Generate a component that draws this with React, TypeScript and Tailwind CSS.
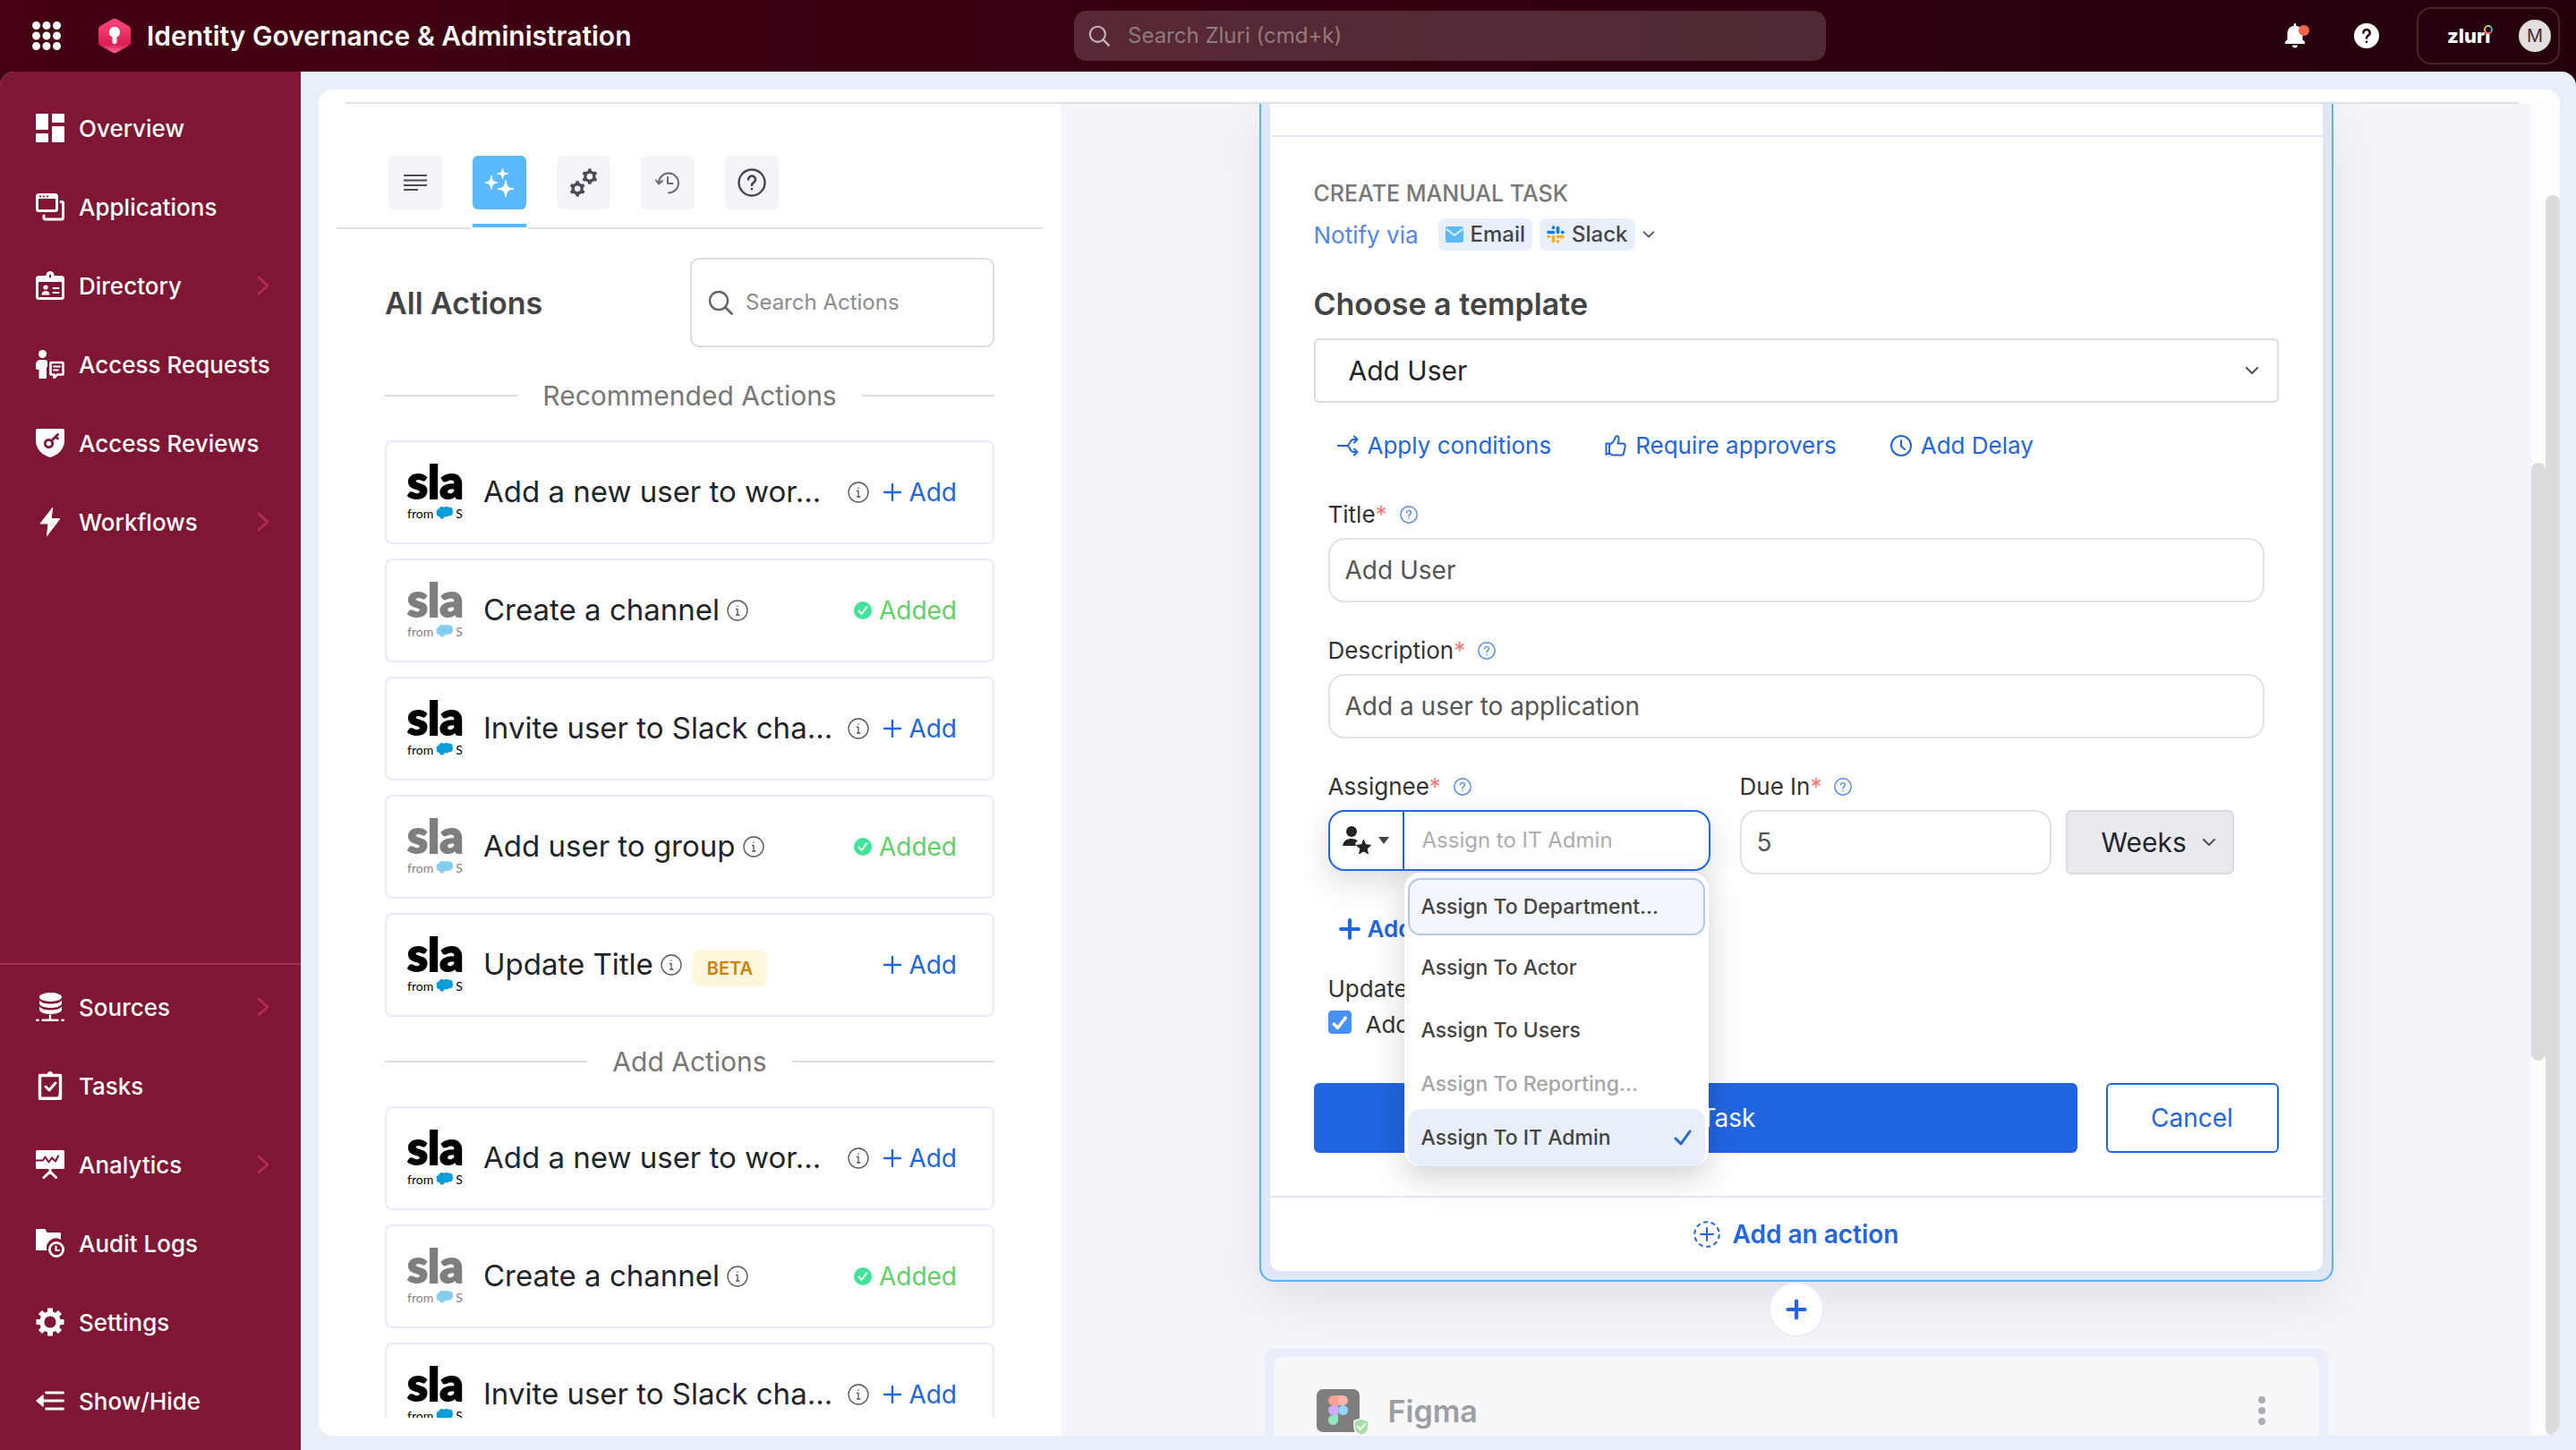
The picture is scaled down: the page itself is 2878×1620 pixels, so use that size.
import React, { useState } from 'react';

interface NavItem {
    label: string;
    icon: React.ReactNode;
    expandable?: boolean;
}

interface Action {
    title: string;
    added?: boolean;
    beta?: boolean;
}

const Glyph: React.FC<{ children: React.ReactNode, className?: string, viewBox?: string }> = ({ children, className = 'size-8', viewBox = '0 0 32 32' }) => (
    <svg viewBox={viewBox} className={`shrink-0 ${className}`} fill="none" stroke="currentColor" strokeLinecap="round" strokeLinejoin="round" aria-hidden="true">
        {children}
    </svg>
);

const mainNav: NavItem[] = [
    {
        label: 'Overview',
        icon: <Glyph><path d="M1 0h12a1 1 0 0 1 1 1v16a1 1 0 0 1-1 1H1a1 1 0 0 1-1-1V1a1 1 0 0 1 1-1zM19 0h12a1 1 0 0 1 1 1v8a1 1 0 0 1-1 1H19a1 1 0 0 1-1-1V1a1 1 0 0 1 1-1zM1 22h12a1 1 0 0 1 1 1v8a1 1 0 0 1-1 1H1a1 1 0 0 1-1-1v-8a1 1 0 0 1 1-1zM19 14h12a1 1 0 0 1 1 1v16a1 1 0 0 1-1 1H19a1 1 0 0 1-1-1V15a1 1 0 0 1 1-1z" fill="currentColor" stroke="none" /></Glyph>,
    },
    {
        label: 'Applications',
        icon: (
            <Glyph>
                <rect x="1.5" y="2.5" width="22" height="18" rx="2" strokeWidth="3" />
                <path d="M2 2h21v5H2z" fill="currentColor" stroke="none" />
                <path d="M5 4.5h.2M9 4.5h.2M13 4.5h.2" stroke="#7f1633" strokeWidth="2" />
                <path d="M28 10.5h1a1.5 1.5 0 0 1 1.5 1.5v16a2 2 0 0 1-2 2H11a2 2 0 0 1-2-2v-2" strokeWidth="3" />
            </Glyph>
        ),
    },
    {
        label: 'Directory',
        expandable: true,
        icon: (
            <Glyph>
                <rect x="1.5" y="6.5" width="29" height="24" rx="2" strokeWidth="3" />
                <path d="M1 6h30v6H1z" fill="currentColor" stroke="none" />
                <path d="M12.5 8V4.5a3.5 3.5 0 0 1 7 0V8z" fill="currentColor" strokeWidth="2" />
                <path d="M16 4.5v2" stroke="#7f1633" strokeWidth="2" />
                <circle cx="11" cy="18" r="2.6" fill="currentColor" stroke="none" />
                <path d="M6.5 26.5a4.5 4.5 0 0 1 9 0z" fill="currentColor" stroke="none" />
                <path d="M19.5 19h6M19.5 24h6" strokeWidth="2" />
            </Glyph>
        ),
    },
    {
        label: 'Access Requests',
        icon: (
            <Glyph>
                <circle cx="7.5" cy="4.5" r="4.5" fill="currentColor" stroke="none" />
                <path d="M0 16a5 5 0 0 1 5-5h5a3 3 0 0 1 3 3v5h-1v12a1 1 0 0 1-1 1H4.5a1 1 0 0 1-1-1V22H1.5A1.5 1.5 0 0 1 0 20.5z" fill="currentColor" stroke="none" />
                <path d="M17 14h13a.5.5 0 0 1 .5.5V27a.5.5 0 0 1-.5.5h-6l-3.500 3.500v-3.500H17a.5.5 0 0 1-.5-.5V14.500A.5.5 0 0 1 17 14z" strokeWidth="2.6" />
                <path d="M20 18.5h7M20 22.5h5" strokeWidth="1.8" />
            </Glyph>
        ),
    },
    {
        label: 'Access Reviews',
        icon: (
            <Glyph>
                <path d="M2 0h28a2 2 0 0 1 2 2v11c0 9-6 16-16 19C6 29 0 22 0 13V2a2 2 0 0 1 2-2z" fill="currentColor" stroke="none" />
                <circle cx="14.5" cy="16.5" r="4.2" stroke="#7f1633" strokeWidth="2.8" />
                <path d="M17.5 13.5 24.5 6.5M22 9l2.5 2" stroke="#7f1633" strokeWidth="2.8" />
            </Glyph>
        ),
    },
    {
        label: 'Workflows',
        expandable: true,
        icon: <Glyph><path d="M18.5.5 5 18h9l-1.500 13.500L27 12.500h-9.500z" fill="currentColor" strokeWidth="1" /></Glyph>,
    },
];

const bottomNav: NavItem[] = [
    {
        label: 'Sources',
        expandable: true,
        icon: (
            <Glyph>
                <ellipse cx="16.5" cy="5" rx="12.5" ry="5" fill="currentColor" stroke="none" />
                <path d="M4 8.500c2 3 7 4 12.500 4s10.500-1 12.500-4V12c0 2.800-5.600 5-12.500 5S4 14.800 4 12zM4 15.500c2 3 7 4 12.500 4s10.500-1 12.500-4V19c0 2.800-5.600 5-12.500 5S4 21.800 4 19z" fill="currentColor" stroke="none" />
                <path d="M16 25.500v4M7.500 30.700h17M1.200 30.700h1.400M29.400 30.700h1.400" strokeWidth="2.4" />
            </Glyph>
        ),
    },
    {
        label: 'Tasks',
        icon: (
            <Glyph>
                <path d="M4.500 4.500h23v25.700h-23z" strokeWidth="3.4" />
                <path d="M11 3h2a3 3 0 0 1 6 0h2v3H11zM29 31h-9c4-1 6-4 6-8h3z" fill="currentColor" stroke="none" />
                <path d="m11 17 4 4 7-8" strokeWidth="3" />
            </Glyph>
        ),
    },
    {
        label: 'Analytics',
        expandable: true,
        icon: (
            <Glyph>
                <path d="M1.500 0h29A1.500 1.500 0 0 1 32 1.500v18a1.500 1.500 0 0 1-1.500 1.500h-29A1.500 1.500 0 0 1 0 19.500v-18A1.500 1.500 0 0 1 1.500 0z" fill="currentColor" stroke="none" />
                <path d="M0 11.500h8l2.500-4 4 6 3.500-5 4 4 3-6" stroke="#7f1633" strokeWidth="2" />
                <path d="M16 21v3l-7 6.500M16 24l6.500 6.500" strokeWidth="3" />
            </Glyph>
        ),
    },
    {
        label: 'Audit Logs',
        icon: (
            <Glyph>
                <path d="M1 0h9.500l2 4H27a1 1 0 0 1 1 1v7a10.500 10.500 0 0 0-15.500 12H1a1 1 0 0 1-1-1V1a1 1 0 0 1 1-1z" fill="currentColor" stroke="none" />
                <circle cx="23" cy="23" r="7.6" strokeWidth="2.8" />
                <path d="M22.500 19.500V24h3.500" strokeWidth="2.2" />
            </Glyph>
        ),
    },
    {
        label: 'Settings',
        icon: (
            <Glyph>
                <circle cx="16" cy="16" r="9.2" strokeWidth="5.2" />
                <path d="M16 .5v5M16 26.500v5M.5 16h5M26.500 16h5M5 5l3.500 3.500M23.500 23.500 27 27M27 5l-3.500 3.500M8.500 23.500 5 27" strokeWidth="6" strokeLinecap="butt" />
            </Glyph>
        ),
    },
    {
        label: 'Show/Hide',
        icon: (
            <Glyph>
                <path d="M8 10v12L1 16z" fill="currentColor" strokeWidth="1.5" />
                <path d="M11.500 7h19M8 16h22.500M11.500 25h19" strokeWidth="2.8" />
            </Glyph>
        ),
    },
];

const recommendedActions: Action[] = [
    { title: 'Add a new user to wor...' },
    { title: 'Create a channel', added: true },
    { title: 'Invite user to Slack cha...' },
    { title: 'Add user to group', added: true },
    { title: 'Update Title', beta: true },
];

const addActions: Action[] = [
    { title: 'Add a new user to wor...' },
    { title: 'Create a channel', added: true },
    { title: 'Invite user to Slack cha...' },
];

const NavLink: React.FC<{ item: NavItem }> = ({ item }) => (
    <li>
        <a href="#" className="flex h-[88px] items-center gap-4 pr-[34px] pl-10 text-[26px] font-medium text-white">
            {item.icon}
            <span className="whitespace-nowrap">{item.label}</span>
            {item.expandable && (
                <Glyph className="ml-auto h-6 w-4 text-[#b52a5a]" viewBox="0 0 16 24">
                    <path d="m3 3 10 9L3 21" strokeWidth="3" />
                </Glyph>
            )}
        </a>
    </li>
);

const InfoIcon = () => (
    <Glyph className="size-6 text-[#555]" viewBox="0 0 24 24">
        <circle cx="12" cy="12" r="11" strokeWidth="1.3" />
        <path d="M10.500 10.500H12v6.500M10.500 17h3.500M12 7v.3" strokeWidth="1.3" />
    </Glyph>
);

const HelpIcon = () => (
    <Glyph className="size-5 text-[#4f86ec]" viewBox="0 0 20 20">
        <circle cx="10" cy="10" r="9.2" strokeWidth="1.4" />
        <path d="M7.600 7.800a2.400 2.400 0 1 1 3.600 2.100c-.8.5-1.200.9-1.200 1.900M10 14.300v.2" strokeWidth="1.4" />
    </Glyph>
);

const ChevronDown: React.FC<{ className?: string }> = ({ className = 'h-3 w-4 text-[#555]' }) => (
    <Glyph className={className} viewBox="0 0 16 12">
        <path d="m2 3 6 6 6-6" strokeWidth="2.2" />
    </Glyph>
);

const SearchIcon: React.FC<{ className: string }> = ({ className }) => (
    <Glyph className={className} viewBox="0 0 28 28">
        <circle cx="12" cy="12" r="10" strokeWidth="2.4" />
        <path d="m19.500 19.500 7 7" strokeWidth="2.8" />
    </Glyph>
);

const SlackWordmark: React.FC<{ muted?: boolean }> = ({ muted }) => (
    <span className={`flex h-[72px] w-[66px] shrink-0 flex-col font-['Lato',sans-serif] text-black ${muted ? 'opacity-50' : ''}`}>
        <svg viewBox="0 0 66 50" className="h-[50px] w-[66px] shrink-0 overflow-visible" aria-hidden="true">
            <text x="0" y="43" fontWeight="900" fontSize="52" fill="#000" stroke="#000" strokeWidth="2">sla</text>
        </svg>
        <span className="flex items-center gap-[3px] text-sm leading-5">
            from
            <svg viewBox="0 0 19 16" className="h-4 w-[19px] shrink-0" aria-hidden="true">
                <path d="M3 3c1-3 4-4 6-2 2-2 5-1 6 0 3-1 4 2 4 5s-2 5-4 4c-2 2-4 1-5 1-1 3-5 4-6 0-3 0-4-2-3-4-1-2 0-4 2-4z" fill="#0d9ddb" />
            </svg>
            S
        </span>
    </span>
);

const ActionCard: React.FC<{ action: Action }> = ({ action }) => (
    <li className="flex h-[116px] shrink-0 items-center rounded-lg border-2 border-[#e8ebfa] pr-10 pl-[23px]">
        <SlackWordmark muted={action.added} />
        <span className="ml-[19px] text-[33px] whitespace-nowrap text-[#212529]">{action.title}</span>
        <span className={action.title.endsWith('...') ? 'ml-auto' : 'ml-2'}><InfoIcon /></span>
        {action.beta && <span className="mt-2 ml-3 rounded-lg bg-[#fff6dc] px-4 text-xl leading-10 font-semibold text-[#d07f05]">BETA</span>}
        {action.added ? (
            <span className="ml-auto flex items-center gap-2 text-[28px] text-[#5fd068]">
                <Glyph className="size-5" viewBox="0 0 20 20">
                    <circle cx="10" cy="10" r="10" fill="#40e39a" stroke="none" />
                    <path d="m5.500 10.500 3 3.500 6-8" stroke="#fff" strokeWidth="2" />
                </Glyph>
                Added
            </span>
        ) : (
            <button className={action.title.endsWith('...') ? 'ml-4 flex items-center gap-2 text-[28px] text-[#2265e0]' : 'ml-auto flex items-center gap-2 text-[28px] text-[#2265e0]'}>
                <Glyph className="size-5" viewBox="0 0 20 20"><path d="M10 1v18M1 10h18" strokeWidth="2.4" /></Glyph>
                Add
            </button>
        )}
    </li>
);

const ActionGroup: React.FC<{ heading: string, actions: Action[] }> = ({ heading, actions }) => (
    <section>
        <h3 className="my-[30px] flex items-center gap-7 text-[30px] leading-10 text-[#777]">
            <span className="h-0.5 flex-1 bg-[#dcdcdc]" />
            {heading}
            <span className="h-0.5 flex-1 bg-[#dcdcdc]" />
        </h3>
        <ul className="flex flex-col gap-4">
            {actions.map(action => <ActionCard key={action.title} action={action} />)}
        </ul>
    </section>
);

const tabs = [
    {
        name: 'Details',
        icon: <Glyph className="h-6 w-7 text-[#4a4b55]" viewBox="0 0 28 24"><path d="M1 4h26M1 9.500h26M1 15h26M1 20h16" strokeWidth="2" strokeLinecap="butt" /></Glyph>,
    },
    {
        name: 'Actions',
        icon: <Glyph className="size-8 text-white"><path d="M19.500 0c.8 4.500 1.800 5.500 6 6-4.200.5-5.200 1.500-6 6-.8-4.500-1.800-5.500-6-6 4.200-.5 5.200-1.500 6-6zM7 8.500c1 5.500 2.200 6.800 7 7.500-4.800.7-6 2-7 7.500-1-5.500-2.200-6.800-7-7.500 4.800-.7 6-2 7-7.500zM23 14c1.200 6.500 2.700 8.200 9 9-6.300.8-7.800 2.500-9 9-1.200-6.500-2.700-8.200-9-9 6.300-.8 7.800-2.500 9-9z" fill="currentColor" stroke="currentColor" strokeWidth="1" /></Glyph>,
    },
    {
        name: 'Automation',
        icon: (
            <Glyph className="size-8 text-[#4a4b55]" viewBox="0 0 28 28">
                <circle cx="20" cy="8" r="4.4" strokeWidth="3" />
                <path d="M20 .5v3M20 12.500v3M13.500 4.200l2.500 1.500M24 10.300l2.500 1.500M13.500 11.800l2.500-1.500M24 5.700l2.500-1.500" strokeWidth="3.2" strokeLinecap="butt" />
                <circle cx="8" cy="20" r="4.4" strokeWidth="3" />
                <path d="M8 12.500v3M8 24.500v3M1.500 16.200 4 17.700M12 22.300l2.500 1.500M1.500 23.800 4 22.300M12 17.700l2.500-1.500" strokeWidth="3.2" strokeLinecap="butt" />
            </Glyph>
        ),
    },
    {
        name: 'History',
        icon: <Glyph className="size-7 text-[#6b6c72]" viewBox="0 0 28 28"><path d="M4 14a11 11 0 1 1 11 11.500M1 11.500 4 15.500l4-3.500M14 8v7h5.500" strokeWidth="2" /></Glyph>,
    },
    {
        name: 'Help',
        icon: <Glyph className="size-8 text-[#44454f]"><circle cx="16" cy="16" r="14.5" strokeWidth="2.4" /><path d="M12 12.500a4 4 0 1 1 6 3.500c-1.400.8-2 1.500-2 3M16 23v.3" strokeWidth="2.6" /></Glyph>,
    },
];

const ActionsPanel = () => {
    const [activeTab, setActiveTab] = useState('Actions');

    return (
        <aside className="flex w-[829px] shrink-0 flex-col pt-[58px] pb-5">
            <div role="tablist" className="mx-5 flex gap-[34px] border-b-2 border-[#dee2e6] pl-[58px]">
                {tabs.map(tab => (
                    <div key={tab.name} className={activeTab === tab.name ? '-mx-0.5 -mb-0.5 border-b-2 border-white bg-white px-0.5' : ''}>
                        <div className={activeTab === tab.name ? 'border-b-4 border-[#5ab9ff] pb-4' : 'pb-5'}>
                            <button
                                role="tab"
                                aria-label={tab.name}
                                aria-selected={activeTab === tab.name}
                                onClick={() => setActiveTab(tab.name)}
                                className={`flex size-[60px] items-center justify-center rounded-md ${activeTab === tab.name ? 'bg-[#5ab9ff]' : 'bg-[#f4f5fa]'}`}
                            >
                                {tab.icon}
                            </button>
                        </div>
                    </div>
                ))}
            </div>
            <div className="min-h-0 flex-1 overflow-hidden px-[74px] pt-8">
                <div className="mb-[34px] flex items-center justify-between">
                    <h2 className="text-[34px] font-semibold text-[#444]">All Actions</h2>
                    <label className="flex h-[100px] w-[340px] items-center gap-[14px] rounded-[10px] border-2 border-[#dcdcdc] pl-[18px]">
                        <SearchIcon className="size-7 text-[#666]" />
                        <input type="search" aria-label="Search Actions" placeholder="Search Actions" className="w-full min-w-0 text-2xl outline-none placeholder:text-[#8c8c8c]" />
                    </label>
                </div>
                <ActionGroup heading="Recommended Actions" actions={recommendedActions} />
                <ActionGroup heading="Add Actions" actions={addActions} />
            </div>
        </aside>
    );
};

const FieldLabel: React.FC<{ htmlFor: string, children: React.ReactNode }> = ({ htmlFor, children }) => (
    <label htmlFor={htmlFor} className="flex items-center text-[26px] leading-8 text-[#333]">
        {children}
        <span className="mr-[14px] text-[#ff7b7b]">*</span>
        <HelpIcon />
    </label>
);

const assigneeOptions = [
    { label: 'Assign To Department...', rowClass: 'mb-1 h-16 border-2 border-[#b0c7f2] bg-[#f3f6fe] px-[13px]' },
    { label: 'Assign To Actor', rowClass: 'mb-1.5 h-16 px-[15px]' },
    { label: 'Assign To Users', rowClass: 'h-16 px-[15px]' },
    { label: 'Assign To Reporting...', disabled: true, rowClass: 'h-14 px-[15px] text-[#a6a6a6]' },
    { label: 'Assign To IT Admin', selected: true, rowClass: 'h-16 bg-[#e8effb] px-[15px]' },
];

const AssigneeField = () => (
    <div className="relative flex h-[68px] w-[427px] rounded-[18px] border-2 border-[#2265e0] bg-white shadow-[0_12px_36px_rgba(0,0,0,0.14)]">
        <button aria-label="Assignee type" className="flex w-[83px] items-center justify-center gap-2 border-r-2 border-[#2265e0]">
            <Glyph className="size-8 text-[#212529]">
                <circle cx="10" cy="6" r="6" fill="currentColor" stroke="none" />
                <path d="M0 22c1-6 5-8 10-8 3 0 6 1 7 3-3 0-3 3-2 5z" fill="currentColor" stroke="none" />
                <path d="m23.500 15.500 2.300 5.200 5.700.6-4.300 3.900 1.200 5.600-4.900-2.900-4.900 2.900 1.200-5.600-4.300-3.900 5.700-.6z" fill="currentColor" strokeWidth="1" />
            </Glyph>
            <Glyph className="h-2 w-3 text-[#444]" viewBox="0 0 12 8"><path d="M0 0h12L6 8z" fill="currentColor" stroke="none" /></Glyph>
        </button>
        <input id="assignee" placeholder="Assign to IT Admin" className="min-w-0 flex-1 px-5 text-2xl outline-none placeholder:text-[#adadad]" />
        <ul role="listbox" aria-label="Assignee" className="absolute top-[68px] left-[83px] z-10 w-[340px] rounded-[18px] bg-white px-1 pt-1.5 text-[23px] font-medium text-[#444] shadow-[0_12px_36px_rgba(0,0,0,0.18)]">
            {assigneeOptions.map(option => (
                <li key={option.label} role="option" aria-selected={!!option.selected} aria-disabled={option.disabled} className={`flex items-center justify-between rounded-[14px] whitespace-nowrap ${option.rowClass}`}>
                    {option.label}
                    {option.selected && <Glyph className="size-5 text-[#2265e0]" viewBox="0 0 20 20"><path d="m2 11 6 6L18 3" strokeWidth="3" /></Glyph>}
                </li>
            ))}
        </ul>
    </div>
);

const textInput = 'h-[72px] w-full rounded-[18px] border-2 border-[#e2e2e2] px-[17px] text-[28px] text-[#555] outline-none';

const ManualTaskForm = () => {
    const [template, setTemplate] = useState('Add User');
    const [title, setTitle] = useState('Add User');
    const [description, setDescription] = useState('Add a user to application');
    const [dueIn, setDueIn] = useState('5');
    const [addNote, setAddNote] = useState(true);

    return (
        <form className="px-[49px] pt-[47px] pb-12" onSubmit={e => e.preventDefault()}>
            <p className="text-[25px] leading-8 font-medium text-[#777]">CREATE MANUAL TASK</p>
            <div className="mt-3 flex h-9 items-center text-[26px]">
                <span className="text-[#5385ea]">Notify via</span>
                <span className="ml-[22px] flex h-9 items-center gap-2 rounded-lg bg-[#e8effb] px-2 text-2xl font-medium text-[#444]">
                    <Glyph className="size-5" viewBox="0 0 20 20">
                        <rect y="1" width="20" height="18" rx="2" fill="#5ab9ff" stroke="none" />
                        <path d="m1 4 9 7 9-7" stroke="#e8effb" strokeWidth="1.6" />
                    </Glyph>
                    Email
                </span>
                <span className="ml-2 flex h-9 items-center gap-2 rounded-lg bg-[#e8effb] px-2 text-2xl font-medium text-[#444]">
                    <Glyph className="size-5" viewBox="0 0 20 20">
                        <path d="M7.500 2v.5M2 7.500h5.500M12.500 2.500v5M17.500 7.500h.5" stroke="#0a7cff" strokeWidth="3.6" />
                        <path d="M2 12.500h.5M7.500 12.500v5M12.500 17.500v.5M12.500 12.500h5.500" stroke="#f2b02c" strokeWidth="3.6" />
                    </Glyph>
                    Slack
                </span>
                <button aria-label="Change channels" className="ml-2"><ChevronDown className="h-3 w-[14px] text-[#555]" /></button>
            </div>
            <label htmlFor="template" className="mt-10 block text-[34px] leading-10 font-semibold text-[#444]">Choose a template</label>
            <div className="mt-[18px] grid items-center">
                <select id="template" value={template} onChange={e => setTemplate(e.target.value)} className="col-start-1 row-start-1 h-[72px] w-full appearance-none rounded-md border-2 border-[#dcdcdc] bg-white pl-[37px] text-3xl text-[#212529]">
                    <option>Add User</option>
                    <option>Remove User</option>
                </select>
                <span className="pointer-events-none col-start-1 row-start-1 mr-[22px] justify-self-end"><ChevronDown /></span>
            </div>
            <div className="mt-8 flex gap-[60px] pl-[26px] text-[26px] leading-8 text-[#2265e0]">
                <button className="flex items-center gap-2.5">
                    <Glyph className="size-6" viewBox="0 0 24 24"><path d="M0 12h11M11 12c3 0 3-7 7-7h4M11 12c3 0 3 7 7 7h4M19 1.500 22.500 5 19 8.500M19 15.500l3.500 3.500-3.500 3.500" strokeWidth="2" /></Glyph>
                    Apply conditions
                </button>
                <button className="flex items-center gap-2.5">
                    <Glyph className="size-6" viewBox="0 0 24 24"><path d="M1.500 9.500v12.500M1.500 21h3.500V9.500H1.500M5 20l3 2.500h10.500a2.500 2.500 0 0 0 2.500-2l1.700-8a2.500 2.500 0 0 0-2.500-3H14.500c1-3 1.500-5.500.5-7.500-.6-1.200-2.800-1.200-3.200.2C11 5.500 9.500 8.500 5 11" strokeWidth="2" /></Glyph>
                    Require approvers
                </button>
                <button className="flex items-center gap-2.5">
                    <Glyph className="size-6" viewBox="0 0 24 24"><circle cx="12" cy="12" r="11" strokeWidth="2" /><path d="M12 6v6.500l4 3.500" strokeWidth="2" /></Glyph>
                    Add Delay
                </button>
            </div>
            <div className="px-4">
                <div className="mt-[45px] flex flex-col gap-2.5">
                    <FieldLabel htmlFor="title">Title</FieldLabel>
                    <input id="title" value={title} onChange={e => setTitle(e.target.value)} className={textInput} />
                </div>
                <div className="mt-[38px] flex flex-col gap-2.5">
                    <FieldLabel htmlFor="description">Description</FieldLabel>
                    <input id="description" value={description} onChange={e => setDescription(e.target.value)} className={textInput} />
                </div>
                <div className="mt-[38px] flex">
                    <div className="flex flex-col gap-2.5">
                        <FieldLabel htmlFor="assignee">Assignee</FieldLabel>
                        <AssigneeField />
                    </div>
                    <div className="ml-[33px] flex w-[348px] flex-col gap-2.5">
                        <FieldLabel htmlFor="due-in">Due In</FieldLabel>
                        <input id="due-in" value={dueIn} onChange={e => setDueIn(e.target.value)} className={textInput} />
                    </div>
                    <div className="ml-4 grid w-[188px] items-center self-end">
                        <select aria-label="Due in unit" className="col-start-1 row-start-1 h-[72px] w-full appearance-none rounded-md border-2 border-[#dcdcdc] bg-[#e9eaf0] pl-[38px] text-3xl text-[#212529]">
                            <option>Weeks</option>
                            <option>Days</option>
                        </select>
                        <span className="pointer-events-none col-start-1 row-start-1 mr-5 justify-self-end"><ChevronDown /></span>
                    </div>
                </div>
                <button className="mt-[45px] ml-3 flex items-center gap-2 text-[26px] leading-8 font-semibold text-[#2265e0]">
                    <Glyph className="size-6" viewBox="0 0 24 24"><path d="M12 2v20M2 12h20" strokeWidth="4" /></Glyph>
                    Add
                </button>
                <p className="mt-[35px] text-[26px] leading-8 text-[#333]">Update</p>
                <label className="mt-2 flex gap-4 text-[26px] leading-8 text-[#333]">
                    <span className="grid size-[26px] place-items-center">
                        <input type="checkbox" checked={addNote} onChange={e => setAddNote(e.target.checked)} className="col-start-1 row-start-1 size-[26px] appearance-none rounded-sm border border-[#4890ff] checked:bg-[#4890ff]" />
                        <Glyph className="pointer-events-none col-start-1 row-start-1 size-5 text-white" viewBox="0 0 20 20"><path d="m2.500 11 5 5.500L17 4" strokeWidth="3.4" strokeLinecap="butt" /></Glyph>
                    </span>
                    Add
                </label>
            </div>
            <div className="mt-[49px] flex gap-8 text-[28px]">
                <button className="h-[78px] flex-1 rounded-md bg-[#2265e0] text-white">Save Task</button>
                <button className="h-[78px] w-[193px] rounded-md border-2 border-[#2265e0] text-[#2265e0]">Cancel</button>
            </div>
        </form>
    );
};

const WorkflowCanvas = () => (
    <main className="flex min-w-0 flex-1 flex-col items-center overflow-hidden bg-[#f4f5fa]">
        <section className="w-[1200px] shrink-0 rounded-b-2xl border-2 border-t-0 border-[#5ab3f7] bg-[#dfe7f6] px-2.5 pb-2.5 shadow-[0_20px_60px_rgba(0,0,0,0.08)]">
            <div className="rounded-b-xl bg-white">
                <div className="h-[37px] border-b-2 border-[#e3e8f6]" />
                <ManualTaskForm />
                <div className="border-t-2 border-[#e3e8f6]">
                    <button className="flex h-[82px] w-full items-center justify-center gap-[14px] text-[28px] font-semibold text-[#2265e0]">
                        <Glyph className="size-[30px]" viewBox="0 0 30 30">
                            <circle cx="15" cy="15" r="13.8" strokeWidth="2" strokeDasharray="5 3.67" strokeLinecap="butt" />
                            <path d="M15 8v14M8 15h14" strokeWidth="2" />
                        </Glyph>
                        Add an action
                    </button>
                </div>
            </div>
        </section>
        <button aria-label="Add step" className="flex size-[62px] shrink-0 items-center justify-center rounded-full border-2 border-[#e8ebf8] bg-white text-[#2265e0]">
            <Glyph className="size-6" viewBox="0 0 24 24"><path d="M12 2.500v19M2.500 12h19" strokeWidth="4.2" /></Glyph>
        </button>
        <section className="mt-3 w-[1188px] shrink-0 rounded-t-xl bg-[#e9eefa] px-2.5 pt-2.5">
            <div className="flex h-[120px] items-center rounded-t-xl bg-[#f7f8fa] px-12">
                <div className="relative">
                    <Glyph className="size-12" viewBox="0 0 48 48">
                        <rect width="48" height="48" rx="7" fill="#7e7e81" stroke="none" />
                        <path d="M24 7h-5.500a5.500 5.500 0 0 0 0 11H24z" fill="#f7a08f" stroke="none" />
                        <path d="M24 7h5.500a5.500 5.500 0 0 1 0 11H24z" fill="#fbb5ae" stroke="none" />
                        <path d="M24 18h-5.500a5.500 5.500 0 0 0 0 11H24z" fill="#cfa9fb" stroke="none" />
                        <circle cx="29.5" cy="23.5" r="5.5" fill="#8fd8fb" stroke="none" />
                        <path d="M24 29h-5.500a5.500 5.500 0 1 0 5.500 5.500z" fill="#92e5bd" stroke="none" />
                    </Glyph>
                    <Glyph className="absolute top-8 left-10 size-5" viewBox="0 0 20 20">
                        <path d="m10 1 8 2.500V10c0 5-3 8-8 9.500C5 18 2 15 2 10V3.500z" fill="#a5dca8" stroke="#f7f8fa" strokeWidth="1.5" />
                        <path d="m6 10 3 3 5-6" stroke="#fff" strokeWidth="1.8" />
                    </Glyph>
                </div>
                <h3 className="ml-8 text-[34px] font-semibold text-[#9d9ea1]">Figma</h3>
                <button aria-label="More options" className="mr-3 ml-auto text-[#adaeb1]">
                    <Glyph className="h-8 w-2" viewBox="0 0 8 32"><path d="M4 0a4 4 0 1 1 0 8 4 4 0 0 1 0-8zM4 12a4 4 0 1 1 0 8 4 4 0 0 1 0-8zM4 24a4 4 0 1 1 0 8 4 4 0 0 1 0-8z" fill="currentColor" stroke="none" /></Glyph>
                </button>
            </div>
        </section>
    </main>
);

const Header = () => (
    <header className="grid h-20 shrink-0 grid-cols-[1fr_840px_838px] items-center bg-linear-to-r from-[#450013] to-[#25000a] text-white">
        <div className="flex items-center pl-9">
            <button aria-label="Switch product">
                <Glyph className="size-8"><path d="M4.500 4.500h.01M16 4.500h.01M27.500 4.500h.01M4.500 16h.01M16 16h.01M27.500 16h.01M4.500 27.500h.01M16 27.500h.01M27.500 27.500h.01" strokeWidth="9" /></Glyph>
            </button>
            <svg viewBox="0 0 36 40" className="ml-[42px] h-10 w-9" aria-hidden="true">
                <defs>
                    <linearGradient id="shield" x1="0" y1="0" x2="0" y2="1">
                        <stop offset="0" stopColor="#ff4b80" />
                        <stop offset="0.75" stopColor="#dd1c52" />
                        <stop offset="1" stopColor="#ff6f98" />
                    </linearGradient>
                </defs>
                <path d="M15.500 1.500Q18 0 20.500 1.500L33 8.500Q36 10 36 13v14q0 3-3 4.500L20.500 38.500Q18 40 15.500 38.500L3 31.500Q0 30 0 27V13Q0 10 3 8.500z" fill="url(#shield)" />
                <path d="M18 10a6 6 0 0 1 2.500 11.500L20.500 27a2.500 2.500 0 0 1-5 0v-5.500A6 6 0 0 1 18 10z" fill="#fff" />
            </svg>
            <h1 className="ml-[18px] text-[30px] font-semibold whitespace-nowrap">Identity Governance &amp; Administration</h1>
        </div>
        <label className="flex h-14 items-center gap-5 rounded-[14px] bg-white/16 px-4">
            <SearchIcon className="size-6 text-[#c4b3b8]" />
            <input type="search" aria-label="Search Zluri" placeholder="Search Zluri (cmd+k)" className="w-full text-2xl outline-none placeholder:text-[#937a81]" />
        </label>
        <div className="flex items-center justify-end pr-[18px]">
            <button aria-label="Notifications" className="relative">
                <Glyph className="h-7 w-7" viewBox="0 0 28 28">
                    <path d="M10.800 1.200a1.200 1.200 0 0 1 2.400 0v1.500C18 3.500 20.500 7 20.500 11.500v7L23 20.500V23H1v-2.500L3.500 18.500v-7C3.500 7 6 3.500 10.800 2.700zM9 24.500h6a3 3 0 0 1-6 0z" fill="currentColor" stroke="none" />
                </Glyph>
                <span className="absolute top-0.5 right-0 size-3 rounded-full bg-[#ff6250]" />
            </button>
            <button aria-label="Help" className="ml-[50px]">
                <Glyph className="size-7" viewBox="0 0 28 28">
                    <circle cx="14" cy="14" r="14" fill="currentColor" stroke="none" />
                    <path d="M10.500 10.500a3.600 3.600 0 1 1 5.500 3.200c-1.400.8-2 1.400-2 2.800M14 20.700v.1" stroke="#2a000b" strokeWidth="2.6" />
                </Glyph>
            </button>
            <button className="ml-[42px] flex h-16 w-40 items-center justify-between rounded-2xl border-2 border-white/15 pr-2 pl-8">
                <span className="relative text-[22px] font-extrabold">zlurı<span className="absolute top-1 -right-0.5 size-2.5 rounded-full border-2 border-t-[#9be070] border-r-[#3fb4e8] border-b-[#f25c54] border-l-[#f7b733]" /></span>
                <span className="flex size-9 items-center justify-center rounded-full bg-[#e3dee0] text-xl text-[#4a2a33]">M</span>
            </button>
        </div>
    </header>
);

const App = () => (
    <div className="flex h-screen flex-col overflow-hidden bg-linear-to-r from-[#450013] to-[#25000a] font-['Inter',sans-serif]">
        <Header />
        <div className="flex min-h-0 flex-1 overflow-hidden rounded-t-2xl bg-[#e8effb]">
            <nav className="flex w-[336px] shrink-0 flex-col justify-between bg-[#7f1633]">
                <ul className="pt-[19px]">
                    {mainNav.map(item => <NavLink key={item.label} item={item} />)}
                </ul>
                <ul className="border-t-2 border-[#a63054] pt-[3px] pb-[11px]">
                    {bottomNav.map(item => <NavLink key={item.label} item={item} />)}
                </ul>
            </nav>
            <div className="flex min-w-0 flex-1 pt-5 pr-[18px] pb-4 pl-5">
                <div className="flex min-w-0 flex-1 overflow-hidden rounded-2xl bg-white">
                    <div className="flex min-w-0 flex-1 flex-col pt-[14px]">
                        <div className="mx-[30px] h-0.5 shrink-0 bg-[#dee2e6]" />
                        <div className="flex min-h-0 flex-1">
                            <ActionsPanel />
                            <WorkflowCanvas />
                            <div className="w-4 bg-[#fdfdfd] pt-[401px]">
                                <div className="h-[668px] rounded-full bg-[#dcdcdc]" />
                            </div>
                        </div>
                    </div>
                    <div className="w-4 bg-[#fdfdfd] pt-[118px]">
                        <div className="h-full rounded-full bg-[#dcdcdc]" />
                    </div>
                </div>
            </div>
        </div>
    </div>
);

export default App;
